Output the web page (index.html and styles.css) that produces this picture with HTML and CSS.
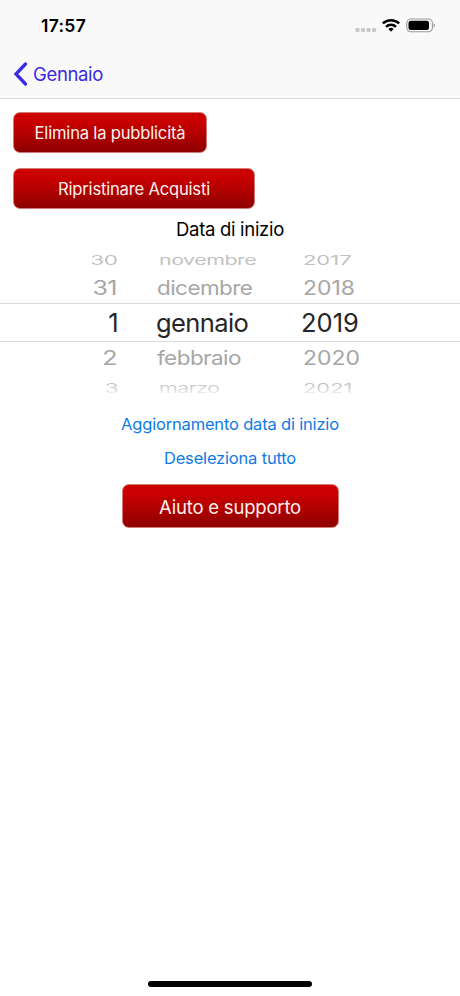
FILE: index.html
```html
<!DOCTYPE html>
<html lang="it">

<head>
  <meta charset="UTF-8" />
  <meta name="viewport" content="width=device-width, initial-scale=1.0" />
  <title>Impostazioni</title>
  <link rel="stylesheet" href="styles.css">
</head>

<body>
  <div class="screen">
    <header class="header">
      <div class="status">
        <span class="time">17:57</span>
        <svg class="status-icons" width="82" height="18" viewBox="0 0 82 18">
          <g fill="#c8c8ca">
            <rect x="0.5" y="12" width="4" height="4" rx="1" />
            <rect x="6" y="12" width="4" height="4" rx="1" />
            <rect x="11.5" y="12" width="4" height="4" rx="1" />
            <rect x="17" y="12" width="4" height="4" rx="1" />
          </g>
          <g fill="none" stroke="#000" stroke-width="2.5">
            <path d="M27.8 7.4a12 12 0 0 1 16.4 0" />
            <path d="M31 10.8a7.3 7.3 0 0 1 10 0" />
          </g>
          <path d="M33.4 13a3.9 3.9 0 0 1 5.2 0L36 15.8z" />
          <rect x="51.8" y="3" width="25.6" height="12.8" rx="4" fill="none" stroke="#9b9b9d" stroke-width="1.1" />
          <rect x="53.5" y="4.8" width="20.5" height="9.2" rx="2.3" />
          <path d="M78.7 7.3v4.2a2.3 2.3 0 0 0 0-4.2z" fill="#9b9b9d" />
        </svg>
      </div>
      <a class="back">
        <svg width="16" height="26" viewBox="0 0 16 26">
          <path d="M12.5 3L3 13l9.5 10" fill="none" stroke="#3a2be2" stroke-width="3.3" stroke-linecap="round" />
        </svg>
        <span class="back-label">Gennaio</span>
      </a>
    </header>

    <main class="content">
      <button type="button" class="button remove-ads"><span>Elimina la pubblicità</span></button>
      <button type="button" class="button restore"><span>Ripristinare Acquisti</span></button>

      <h1 class="title">Data di inizio</h1>
      <div class="picker">
        <div class="row far top">
          <span class="day">30</span><span class="month">novembre</span><span class="year">2017</span>
        </div>
        <div class="row near">
          <span class="day">31</span><span class="month">dicembre</span><span class="year">2018</span>
        </div>
        <div class="row selected">
          <span class="day">1</span><span class="month">gennaio</span><span class="year">2019</span>
        </div>
        <div class="row near">
          <span class="day">2</span><span class="month">febbraio</span><span class="year">2020</span>
        </div>
        <div class="row far bottom">
          <span class="day">3</span><span class="month">marzo</span><span class="year">2021</span>
        </div>
      </div>

      <a class="link update">Aggiornamento data di inizio</a>
      <a class="link clear">Deseleziona tutto</a>
      <button type="button" class="button support"><span>Aiuto e supporto</span></button>
    </main>

    <div class="home-bar"></div>
  </div>
</body>

</html>
```
FILE: styles.css
```css
* {
  box-sizing: border-box;
}

body {
  margin: 0;
  background: #fff;
  font-family: Inter, "Liberation Sans", sans-serif;
  color: #000;
}

.screen {
  display: flex;
  flex-direction: column;
  height: 996px;
  overflow: hidden;
}

.header {
  height: 99px;
  background: #f9f9f9;
  border-bottom: 1px solid #dcdcdc;
}

.status {
  display: flex;
  justify-content: space-between;
  height: 49px;
  padding: 16px 23px 0 41px;
}

.time {
  font-size: 17.5px;
  font-weight: 600;
  line-height: 20px;
  letter-spacing: 0.3px;
}

.back {
  display: flex;
  align-items: center;
  height: 50px;
  padding-left: 13px;
  color: #3a2be2;
}

.back-label {
  margin-left: 4px;
  font-size: 18.5px;
  font-weight: 380;
  letter-spacing: -0.35px;
}

.content {
  flex: 1;
  display: flex;
  flex-direction: column;
  align-items: center;
  padding-top: 13px;
}

.button {
  height: 41px;
  padding: 1px 0 0;
  border: 1px solid #d67a7a;
  border-radius: 7px;
  background: linear-gradient(#cd0000, #cb0000 20%, #8e0000);
  color: #fff0ee;
  font-family: inherit;
  font-size: 16.6px;
  font-weight: 400;
  letter-spacing: -0.2px;
}

.remove-ads {
  align-self: flex-start;
  width: 194px;
  margin-left: 13px;
}

.restore {
  align-self: flex-start;
  width: 242px;
  margin: 15px 0 0 13px;
}

.title {
  margin: 9px 0 0;
  font-size: 18.5px;
  font-weight: 400;
  line-height: 22px;
  letter-spacing: -0.3px;
}

.picker {
  width: 100%;
  margin-top: 5px;
}

.row {
  display: grid;
  grid-template-columns: 118px 183px 1fr;
  align-items: center;
  white-space: nowrap;
  font-size: 25.5px;
  font-weight: 380;
  letter-spacing: -0.6px;
}

.day {
  justify-self: end;
  transform-origin: right;
}

.month {
  justify-self: start;
  margin-left: 38px;
  transform-origin: left;
}

.year {
  justify-self: start;
  transform-origin: left;
  letter-spacing: 0;
}

.selected {
  height: 39px;
  border: solid #dcdcdc;
  border-width: 1px 0;
  color: #262626;
}

.near {
  height: 31px;
  color: #a6a6a6;
}

.near span {
  transform: translateX(1px) scale(0.88, 0.78);
}

.near .day {
  transform: translateX(-1px) scale(0.98, 0.78);
}

.near .year {
  transform: translateX(2px) scale(0.9, 0.78);
}

.far {
  height: 27px;
  color: #c2c2c2;
}

.far span {
  transform: translateX(3px) scale(0.84, 0.52);
}

.far .day {
  transform: scale(0.89, 0.52);
}

.far .year {
  transform: translateX(2px) scale(0.86, 0.52);
}

.top {
  padding-bottom: 3px;
}

/* the last row fades out at the edge of the wheel */
.bottom {
  padding-bottom: 3px;
  -webkit-mask-image: linear-gradient(#000 40%, transparent 90%);
  mask-image: linear-gradient(#000 40%, transparent 90%);
}

.link {
  color: #0f7be5;
  font-size: 16.5px;
  line-height: 20px;
  letter-spacing: -0.18px;
}

.update {
  margin-top: 14px;
}

.clear {
  margin-top: 14px;
}

.support {
  width: 217px;
  height: 44px;
  margin-top: 16px;
  font-size: 18.5px;
}

.home-bar {
  align-self: center;
  width: 164px;
  height: 6px;
  margin-bottom: 9px;
  border-radius: 3px;
  background: #000;
}
```
